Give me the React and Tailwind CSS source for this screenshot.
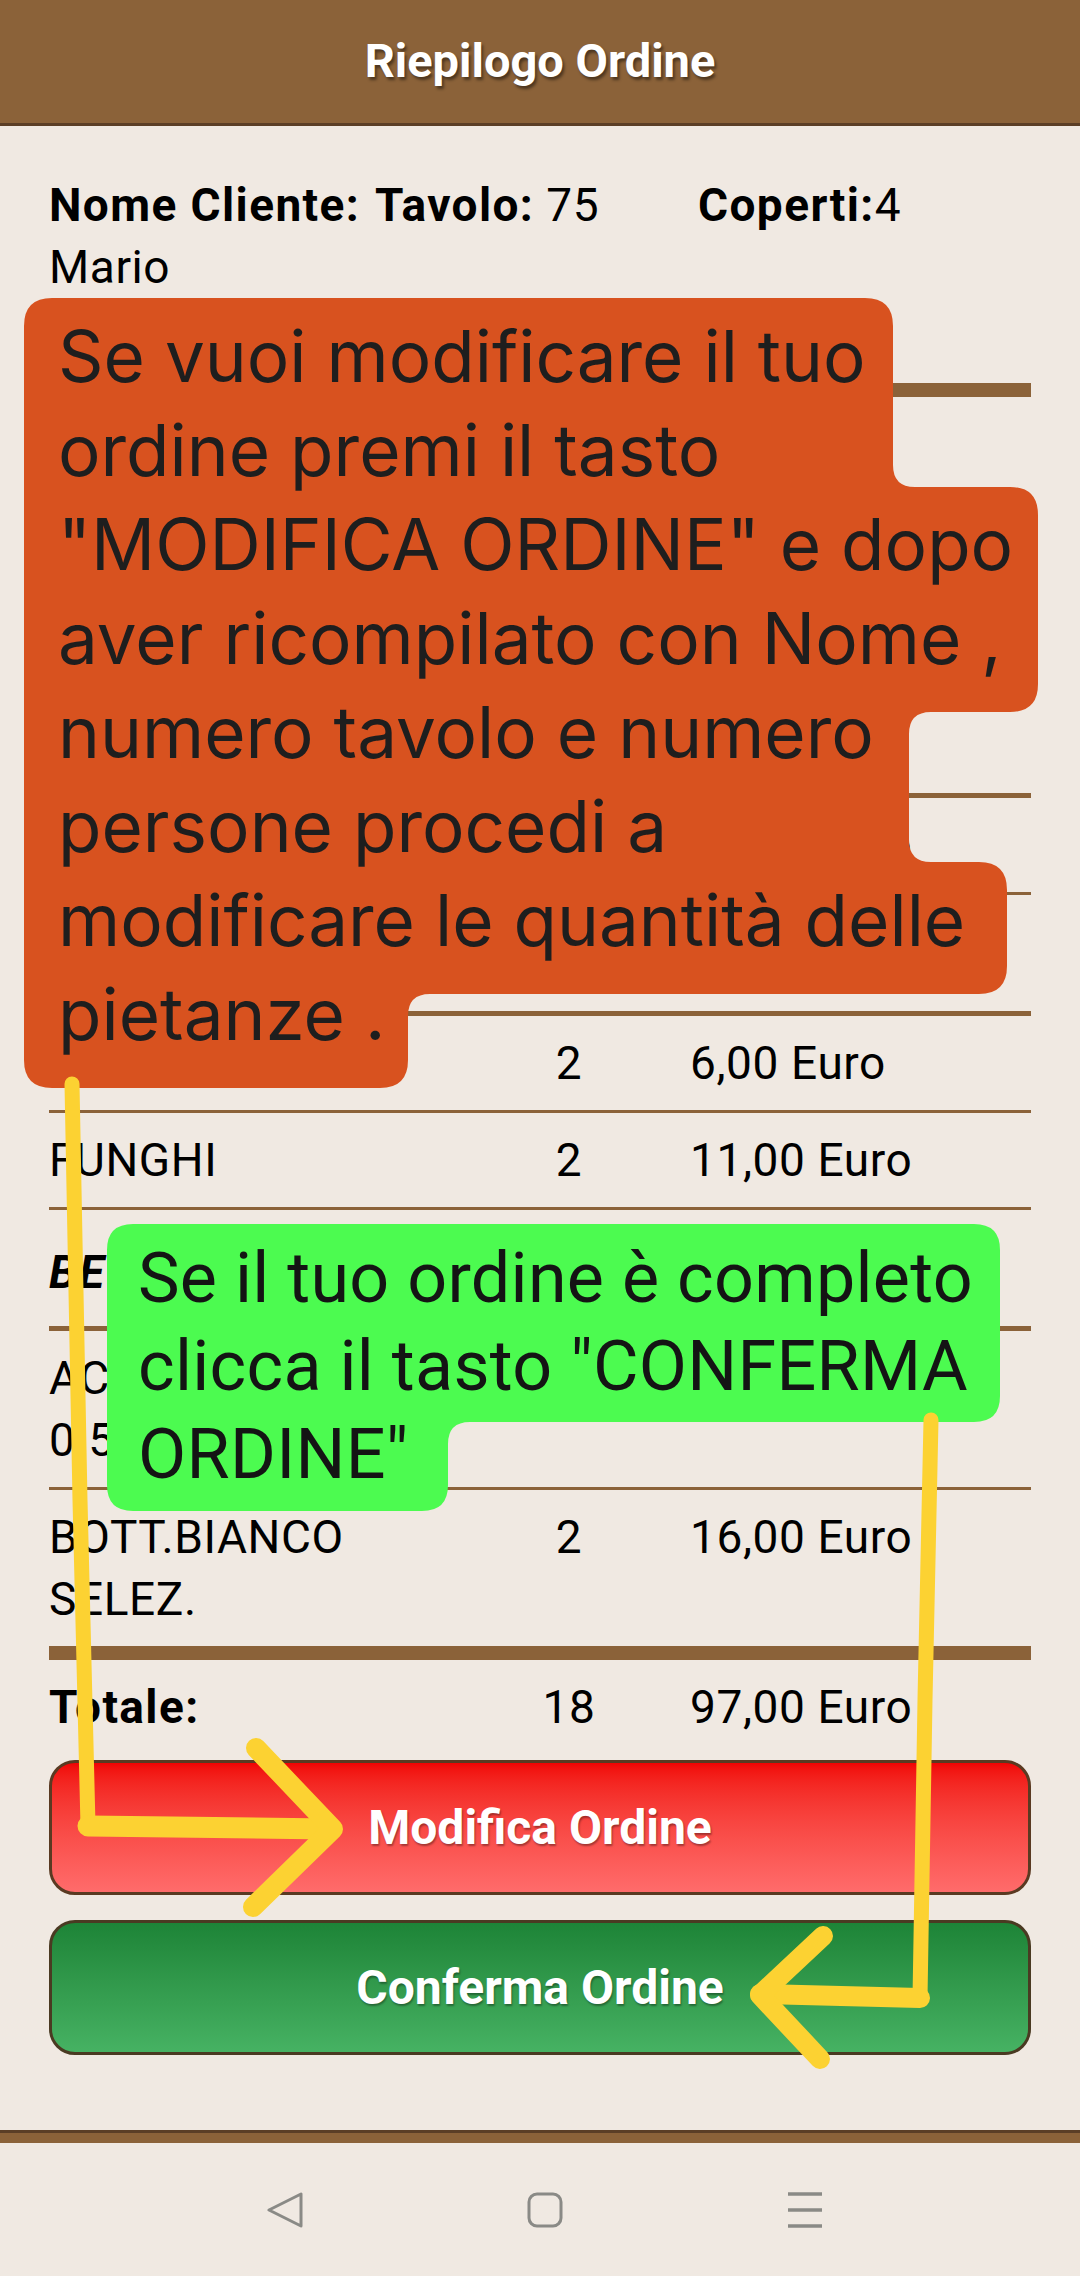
import React from 'react';

const sections = [
  { title: 'ANTIPASTI', items: [{ lines: ['BRUSCHETTA AL', 'POMODORO'], qty: 2, price: '10,00 Euro' }] },
  { title: 'PRIMI PIATTI', items: [{ lines: ['CARBONARA'], qty: 4, price: '45,00 Euro' }] },
  {
    title: 'PIZZE',
    items: [
      { lines: ['MARINARA'], qty: 2, price: '6,00 Euro' },
      { lines: ['FUNGHI'], qty: 2, price: '11,00 Euro' },
    ],
  },
  {
    title: 'BEVANDE',
    items: [
      { lines: ['ACQUA NATURALE', '0.5 L'], qty: 6, price: '9,00 Euro' },
      { lines: ['BOTT.BIANCO', 'SELEZ.'], qty: 2, price: '16,00 Euro' },
    ],
  },
];

const orangeLines = [
  'Se vuoi modificare il tuo',
  'ordine premi il tasto',
  '"MODIFICA ORDINE" e dopo',
  'aver ricompilato con Nome ,',
  'numero tavolo e numero',
  'persone procedi a',
  'modificare le quantità delle',
  'pietanze .',
];

const greenLines = ['Se il tuo ordine è completo', 'clicca il tasto "CONFERMA', 'ORDINE"'];

const ItemRow = ({ item }) => (
  <div className="grid grid-cols-[415px_210px_1fr] pt-[16px] pb-[16px] text-[46px] leading-[62px] tracking-[0.6px] text-black">
    <div className="whitespace-nowrap overflow-hidden">
      {item.lines.map((l) => (
        <div key={l}>{l}</div>
      ))}
    </div>
    <div className="text-center">{item.qty}</div>
    <div className="pl-[16px]">{item.price}</div>
  </div>
);

// annotation shapes drawn over the screenshot
const Annotations = () => (
  <svg className="absolute left-0 top-0 pointer-events-none" width="1080" height="2276" viewBox="0 0 1080 2276">
    <path
      fill="#d8521f"
      d="M52 298 H865 Q893 298 893 326 V465 Q893 487 915 487 H1010 Q1038 487 1038 515 V684 Q1038 712 1010 712 H931 Q909 712 909 734 V840 Q909 862 931 862 H979 Q1007 862 1007 890 V966 Q1007 994 979 994 H430 Q408 994 408 1016 V1060 Q408 1088 380 1088 H52 Q24 1088 24 1060 V326 Q24 298 52 298 Z"
    />
    <path
      fill="#4cfb50"
      d="M133 1224 H974 Q1000 1224 1000 1250 V1396 Q1000 1422 974 1422 H470 Q448 1422 448 1444 V1485 Q448 1511 422 1511 H133 Q107 1511 107 1485 V1250 Q107 1224 133 1224 Z"
    />
    <g fill="none" stroke="#fcd232" strokeLinecap="round" strokeLinejoin="round">
      <path d="M72 1084 L80 1500 L88 1826" strokeWidth="15" />
      <path d="M88 1826 L330 1829" strokeWidth="21" />
      <path d="M256 1748 L333 1829 L253 1907" strokeWidth="20" />
      <path d="M931 1420 L925 1700 L920 1998" strokeWidth="15" />
      <path d="M920 1998 L760 1994" strokeWidth="20" />
      <path d="M823 1936 L760 1995 L820 2059" strokeWidth="20" />
    </g>
  </svg>
);

export default function App() {
  const allItems = sections.flatMap((s) => s.items);
  const lastItem = allItems[allItems.length - 1];

  return (
    <div className="relative w-[1080px] h-[2276px] overflow-hidden bg-[#f0e9e2] flex flex-col font-['Roboto',_sans-serif]">
      {/* Header */}
      <header className="h-[126px] shrink-0 bg-[#8b6239] border-b-[3px] border-[#5b3e26] flex items-center justify-center">
        <h1 className="text-white font-bold text-[47px] [text-shadow:2px_3px_3px_rgba(0,0,0,0.45)]">
          Riepilogo Ordine
        </h1>
      </header>

      <main className="flex-1 px-[49px] pt-[48px]">
        {/* Info cliente */}
        <div className="grid grid-cols-[326px_323px_1fr] text-[46px] leading-[62px] tracking-[0.6px] text-black">
          <div>
            <span className="font-bold tracking-[1.4px]">Nome Cliente: </span>Mario
          </div>
          <div>
            <span className="font-bold tracking-[1.4px]">Tavolo:</span> 75
          </div>
          <div>
            <span className="font-bold tracking-[1.4px]">Coperti:</span>4
          </div>
        </div>

        <div className="mt-[85px] h-[14px] bg-[#8b6239]" />

        {sections.map((section) => (
          <div key={section.title}>
            <div className="pt-[31px] pb-[23px] text-[46px] leading-[62px] tracking-[1.4px] font-bold italic text-black">
              {section.title}
            </div>
            <div className="h-[5px] bg-[#8b6239]" />
            {section.items.map((item) => (
              <div key={item.lines[0]}>
                <ItemRow item={item} />
                {item !== lastItem && <div className="h-[3px] bg-[#8b6239]" />}
              </div>
            ))}
          </div>
        ))}

        <div className="h-[14px] bg-[#8b6239]" />

        {/* Totale */}
        <div className="grid grid-cols-[415px_210px_1fr] pt-[16px] text-[46px] leading-[62px] tracking-[0.6px] text-black">
          <div className="font-bold tracking-[1.4px]">Totale:</div>
          <div className="text-center">18</div>
          <div className="pl-[16px]">97,00 Euro</div>
        </div>

        <div className="mt-[22px] flex flex-col gap-[25px]">
          <button className="h-[135px] w-full rounded-[26px] border-[3px] border-[#5a3a22] bg-linear-to-b from-[#f10303] to-[#ff6b6b] text-white font-bold text-[48px] [text-shadow:1px_2px_2px_rgba(0,0,0,0.35)]">
            Modifica Ordine
          </button>
          <button className="h-[135px] w-full rounded-[26px] border-[3px] border-[#4a3a22] bg-linear-to-b from-[#1d8437] to-[#46b263] text-white font-bold text-[48px] [text-shadow:1px_2px_2px_rgba(0,0,0,0.35)]">
            Conferma Ordine
          </button>
        </div>
      </main>

      {/* Footer */}
      <div className="h-[13px] shrink-0 bg-[#8b6239] border-t-[3px] border-[#5b3e26]" />

      {/* Android nav bar */}
      <nav className="h-[133px] shrink-0 flex items-center justify-center gap-[224px] pl-[10px]">
        <svg width="36" height="36" viewBox="0 0 36 36" fill="none" stroke="#8a8a86" strokeWidth="3" strokeLinejoin="round">
          <path d="M34 2 L34 34 L2 18 Z" />
        </svg>
        <svg width="36" height="36" viewBox="0 0 36 36" fill="none" stroke="#8a8a86" strokeWidth="3">
          <rect x="2" y="2" width="32" height="32" rx="8" />
        </svg>
        <svg width="36" height="36" viewBox="0 0 36 36" fill="none" stroke="#8a8a86" strokeWidth="3.5">
          <path d="M1 2 H35 M1 18 H35 M1 34 H35" />
        </svg>
      </nav>

      <Annotations />

      {/* Orange note */}
      <div className="absolute left-[58px] top-[309px] font-['Inter',_sans-serif] text-[71px] leading-[94px] text-[#1e1e1e] whitespace-nowrap">
        {orangeLines.map((l) => (
          <div key={l}>{l}</div>
        ))}
      </div>

      {/* Green note */}
      <div className="absolute left-[138px] top-[1234px] text-[70px] leading-[88px] tracking-[0.3px] text-[#141414] whitespace-nowrap">
        {greenLines.map((l) => (
          <div key={l}>{l}</div>
        ))}
      </div>
    </div>
  );
}
